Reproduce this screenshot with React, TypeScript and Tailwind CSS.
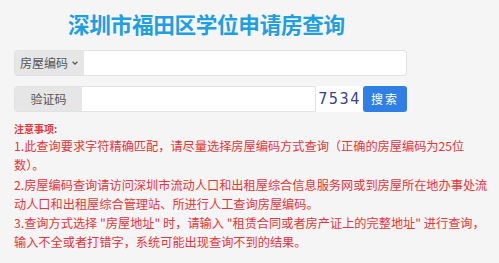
const noteLines = [
  "1.此查询要求字符精确匹配，请尽量选择房屋编码方式查询（正确的房屋编码为25位",
  "数）。",
  "2.房屋编码查询请访问深圳市流动人口和出租屋综合信息服务网或到房屋所在地办事处流",
  "动人口和出租屋综合管理站、所进行人工查询房屋编码。",
  "3.查询方式选择 \"房屋地址\" 时，请输入 \"租赁合同或者房产证上的完整地址\" 进行查询，",
  "输入不全或者打错字，系统可能出现查询不到的结果。",
];

export default function App() {
  return (
    <div
      className="w-[499px] h-[263px] bg-[#f5f5f5] overflow-hidden"
      style={{ fontFamily: '"Noto Sans CJK SC", "Noto Sans", sans-serif' }}
    >
      <h1 className="pl-[68px] pt-[9px] h-[50px] text-[21.6px] leading-[30px] font-bold text-[#1d9fe2] tracking-[-0.3px]">
        深圳市福田区学位申请房查询
      </h1>

      <div className="ml-[14px] w-[393px] flex flex-col gap-[10px]">
        <div className="flex h-[26px] rounded-[3px] border border-[#e2e2e2] bg-white overflow-hidden">
          <div className="w-[69px] bg-[#e6e6e6] flex items-center justify-center gap-[3px] text-[12px] text-[#555]">
            房屋编码
            <svg width="8" height="8" viewBox="0 0 10 10" fill="none" stroke="#555" strokeWidth="1.6">
              <path d="M2 3.5 L5 6.5 L8 3.5" />
            </svg>
          </div>
          <div className="flex-1" />
        </div>

        <div className="flex h-[26px]">
          <div className="flex flex-1 rounded-l-[3px] border border-[#e2e2e2] bg-white overflow-hidden">
            <div className="w-[67px] bg-[#e6e6e6] flex items-center justify-center text-[12px] text-[#555]">
              验证码
            </div>
            <div className="flex-1" />
          </div>
          <div
            className="w-[47px] bg-white flex items-center justify-center text-[16px] font-light text-[#34428e] tracking-[1.5px]"
            style={{ fontFamily: '"DejaVu Sans Condensed", "DejaVu Sans", sans-serif' }}
          >
            7534
          </div>
          <button className="w-[44px] rounded-[3px] bg-[#2f7fe4] text-white text-[12px] tracking-[2px]">
            搜索
          </button>
        </div>
      </div>

      <div className="ml-[14px] mt-[10px] text-[10px] leading-[14px] font-bold text-[#e8343a]">注意事项:</div>
      <div className="ml-[14px] mt-[1px] text-[12.2px] leading-[19.3px] text-[#e8343a] whitespace-nowrap">
        {noteLines.map((n) => (
          <div key={n}>{n}</div>
        ))}
      </div>
    </div>
  );
}
